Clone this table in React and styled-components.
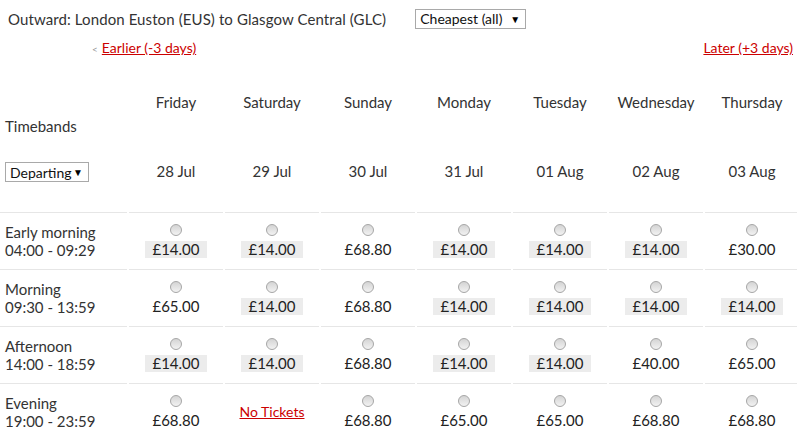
import React from 'react'
import styled, { createGlobalStyle } from 'styled-components'

const Global = createGlobalStyle`
  body {
    margin: 0;
    font-family: Lato, "Open Sans", "Liberation Sans", sans-serif;
    font-size: 15px;
    color: #333;
    background: #fff;
    overflow: hidden;
  }
`;

const Page = styled.div`
  width: 797px;
`;

const TitleBar = styled.div`
  display: flex;
  align-items: center;
  height: 37px;
  padding-left: 8px;
  gap: 29px;
  font-size: 15px;
  letter-spacing: 0.1px;
`;

// fake select box, like the old native one
const Dropdown = styled.div`
  display: inline-flex;
  align-items: center;
  justify-content: space-between;
  box-sizing: border-box;
  height: 20px;
  width: ${({ width }) => width}px;
  padding: 0 5px 0 4px;
  border: 1px solid #a9a9a9;
  background: #fff;
  color: #111;
  font-size: 14px;
  letter-spacing: 0;
  white-space: nowrap;
  &::after {
    content: '▼';
    font-size: 10px;
    color: #000;
  }
`;

const NavRow = styled.div`
  display: flex;
  justify-content: space-between;
  align-items: center;
  height: 20px;
  padding: 0 4px 0 92px;
`;

const NavLink = styled.a`
  color: #cc0000;
  text-decoration: underline;
  font-size: 14px;
  cursor: pointer;
`;

const Chevron = styled.span`
  color: #999;
  font-size: 10px;
  margin-right: 4px;
`;

const Row = styled.div`
  display: grid;
  grid-template-columns: 127px repeat(7, 94px);
  column-gap: 2px;
`;

const HeadCell = styled.div`
  display: flex;
  flex-direction: column;
  align-items: ${({ first }) => (first ? 'flex-start' : 'center')};
  padding: ${({ first }) => (first ? '58px 0 0 5px' : '34px 0 0')};
  height: 155px;
  box-sizing: border-box;
  line-height: 23px;
`;

const Spacer = styled.div`
  height: ${({ h }) => h}px;
`;

const Cell = styled.div`
  border-top: 1px solid #e6e6e6;
  height: 57px;
  box-sizing: border-box;
  display: flex;
  flex-direction: column;
  justify-content: center;
  align-items: ${({ first }) => (first ? 'flex-start' : 'center')};
  padding-left: ${({ first }) => (first ? '5px' : '0')};
  line-height: 18px;
`;

const Radio = styled.span`
  width: 12px;
  height: 12px;
  box-sizing: border-box;
  border-radius: 50%;
  border: 1px solid #a6a6a6;
  background: linear-gradient(#d4d4d4, #f2f2f2);
  margin-bottom: 5px;
`;

const Price = styled.span`
  padding: 0 7px;
  height: 17px;
  line-height: 17px;
  background: ${({ cheap }) => (cheap ? '#ececec' : 'transparent')};
  color: #222;
`;

const days = [
  ['Friday', '28 Jul'],
  ['Saturday', '29 Jul'],
  ['Sunday', '30 Jul'],
  ['Monday', '31 Jul'],
  ['Tuesday', '01 Aug'],
  ['Wednesday', '02 Aug'],
  ['Thursday', '03 Aug'],
];

// price, cheapest flag
const bands = [
  {
    name: 'Early morning',
    time: '04:00 - 09:29',
    prices: [['£14.00', 1], ['£14.00', 1], ['£68.80'], ['£14.00', 1], ['£14.00', 1], ['£14.00', 1], ['£30.00']],
  },
  {
    name: 'Morning',
    time: '09:30 - 13:59',
    prices: [['£65.00'], ['£14.00', 1], ['£68.80'], ['£14.00', 1], ['£14.00', 1], ['£14.00', 1], ['£14.00', 1]],
  },
  {
    name: 'Afternoon',
    time: '14:00 - 18:59',
    prices: [['£14.00', 1], ['£14.00', 1], ['£68.80'], ['£14.00', 1], ['£14.00', 1], ['£40.00'], ['£65.00']],
  },
  {
    name: 'Evening',
    time: '19:00 - 23:59',
    prices: [['£68.80'], null, ['£68.80'], ['£65.00'], ['£65.00'], ['£68.80'], ['£68.80']],
  },
];

const App = () => {
  return (
    <Page>
      <Global />
      <TitleBar>
        <span>Outward: London Euston (EUS) to Glasgow Central (GLC)</span>
        <Dropdown width={111}>Cheapest (all)</Dropdown>
      </TitleBar>
      <NavRow>
        <span>
          <Chevron>&lt;</Chevron>
          <NavLink>Earlier (-3 days)</NavLink>
        </span>
        <NavLink>Later (+3 days)</NavLink>
      </NavRow>
      <Row>
        <HeadCell first>
          <span>Timebands</span>
          <Spacer h={24} />
          <Dropdown width={84}>Departing</Dropdown>
        </HeadCell>
        {days.map(([day, date]) => (
          <HeadCell key={day}>
            <span>{day}</span>
            <Spacer h={46} />
            <span>{date}</span>
          </HeadCell>
        ))}
      </Row>
      {bands.map((b) => (
        <Row key={b.name}>
          <Cell first>
            <span>{b.name}</span>
            <span>{b.time}</span>
          </Cell>
          {b.prices.map((p, i) =>
            p ? (
              <Cell key={i}>
                <Radio />
                <Price cheap={p[1]}>{p[0]}</Price>
              </Cell>
            ) : (
              <Cell key={i}>
                <NavLink>No Tickets</NavLink>
              </Cell>
            )
          )}
        </Row>
      ))}
    </Page>
  );
};

export default App;
